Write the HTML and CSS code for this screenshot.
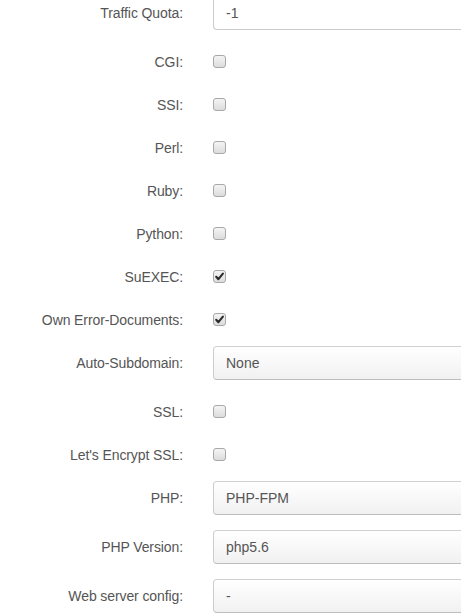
FILE: index.html
```html
<!DOCTYPE html>
<html>
<head>
<meta charset="utf-8">
<link rel="stylesheet" href="styles.css">
</head>
<body>
<form class="form">
  <div class="row">
    <label class="label">Traffic Quota:</label>
    <div class="field"><div class="input plain">-1</div></div>
  </div>
  <div class="row check-row">
    <label class="label">CGI:</label>
    <div class="field"><span class="cb"></span></div>
  </div>
  <div class="row check-row">
    <label class="label">SSI:</label>
    <div class="field"><span class="cb"></span></div>
  </div>
  <div class="row check-row">
    <label class="label">Perl:</label>
    <div class="field"><span class="cb"></span></div>
  </div>
  <div class="row check-row">
    <label class="label">Ruby:</label>
    <div class="field"><span class="cb"></span></div>
  </div>
  <div class="row check-row">
    <label class="label">Python:</label>
    <div class="field"><span class="cb"></span></div>
  </div>
  <div class="row check-row">
    <label class="label">SuEXEC:</label>
    <div class="field"><span class="cb checked"><svg viewBox="0 0 13 13" width="13" height="13"><path d="M3.2 6.8 L5.4 9.2 L9.9 3.6" fill="none" stroke="#2b2b2b" stroke-width="2.1" stroke-linecap="round" stroke-linejoin="round"/></svg></span></div>
  </div>
  <div class="row check-row">
    <label class="label">Own Error-Documents:</label>
    <div class="field"><span class="cb checked"><svg viewBox="0 0 13 13" width="13" height="13"><path d="M3.2 6.8 L5.4 9.2 L9.9 3.6" fill="none" stroke="#2b2b2b" stroke-width="2.1" stroke-linecap="round" stroke-linejoin="round"/></svg></span></div>
  </div>
  <div class="row">
    <label class="label">Auto-Subdomain:</label>
    <div class="field"><div class="input select">None</div></div>
  </div>
  <div class="row check-row">
    <label class="label">SSL:</label>
    <div class="field"><span class="cb"></span></div>
  </div>
  <div class="row check-row">
    <label class="label">Let's Encrypt SSL:</label>
    <div class="field"><span class="cb"></span></div>
  </div>
  <div class="row">
    <label class="label">PHP:</label>
    <div class="field"><div class="input select">PHP-FPM</div></div>
  </div>
  <div class="row">
    <label class="label">PHP Version:</label>
    <div class="field"><div class="input select">php5.6</div></div>
  </div>
  <div class="row">
    <label class="label">Web server config:</label>
    <div class="field"><div class="input select">-</div></div>
  </div>
</form>
</body>
</html>
```
FILE: styles.css
```css
html, body {
  margin: 0;
  padding: 0;
  background: #fff;
  overflow: hidden;
}
body {
  font-family: "Liberation Sans", Arial, sans-serif;
  font-size: 14px;
  color: #555;
}
.form {
  width: 100%;
  margin-top: -4px;
  display: flex;
  flex-direction: column;
  gap: 15px;
}
.row {
  display: grid;
  grid-template-columns: 183px 1fr;
  column-gap: 30px;
  align-items: start;
}
.label {
  text-align: right;
  padding-top: 7px;
  line-height: 20px;
  color: #555;
  letter-spacing: -0.1px;
}
.check-row {
  height: 28px;
}
.field {
  min-width: 0;
}
.input {
  box-sizing: border-box;
  height: 34px;
  padding: 6px 12px;
  line-height: 20px;
  border: 1px solid #ccc;
  border-right: 0;
  border-radius: 4px 0 0 4px;
  color: #555;
}
.plain {
  background: #fff;
  box-shadow: inset 0 1px 1px rgba(0,0,0,0.04);
}
.select {
  background: linear-gradient(#ffffff, #f1f1f1);
  border-color: #d0d0d0 #ccc #bdbdbd;
}
.cb {
  display: block;
  box-sizing: border-box;
  width: 13px;
  height: 13px;
  margin-top: 10px;
  border: 1px solid #a8a8a8;
  border-radius: 3px;
  background: linear-gradient(#f4f4f4, #dcdcdc);
  position: relative;
}
.cb svg {
  position: absolute;
  left: -1px;
  top: -1px;
}
```
